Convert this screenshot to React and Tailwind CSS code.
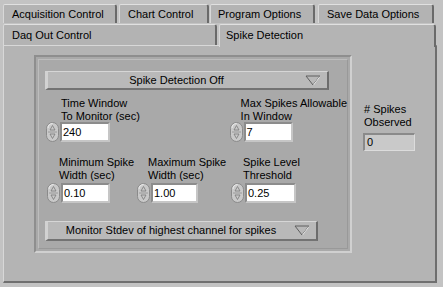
import React from "react";

function Spinner() {
  return (
    <svg width="13" height="20" viewBox="0 0 13 20" className="block shrink-0">
      <rect x="0.5" y="0.5" width="12" height="19" rx="6" ry="6" fill="#c9c9c9" stroke="#8a8a8a" />
      <path d="M2 6 Q2 2 6.5 1.5" stroke="#eeeeee" fill="none" />
      <line x1="2" y1="10" x2="11" y2="10" stroke="#9a9a9a" />
      <polygon points="6.5,3.5 9,8 4,8" fill="none" stroke="#7a7a7a" strokeWidth="0.8" />
      <polygon points="4,12 9,12 6.5,16.5" fill="none" stroke="#7a7a7a" strokeWidth="0.8" />
    </svg>
  );
}

function Numeric({ value, w }) {
  return (
    <div className="flex items-center">
      <Spinner />
      <div
        className={`ml-[1px] h-[20px] ${w} bg-white border-t-2 border-l-2 border-t-[#8c8c8c] border-l-[#8c8c8c] border-b-2 border-r-2 border-b-[#c6c6c6] border-r-[#c6c6c6] pl-[1px] leading-[16px]`}
      >
        {value}
      </div>
    </div>
  );
}

function Arrow() {
  return (
    <svg width="16" height="11" viewBox="0 0 16 11" className="block">
      <polygon points="1,1 15,1 8,10" fill="none" stroke="#5e5e5e" strokeWidth="1" />
      <line x1="15" y1="1.5" x2="8.5" y2="10" stroke="#e4e4e4" strokeWidth="1" />
    </svg>
  );
}

function Dropdown({ text, w, h, ml, mt }) {
  return (
    <div
      className={`${w} ${h} ${ml} ${mt} flex items-center bg-[#b9b9b9] border-l-[3px] border-l-[#d2d2d2] border-t border-t-[#d6d6d6] border-r-2 border-r-[#6c6c6c] border-b-2 border-b-[#737373]`}
    >
      <div className="flex-1 text-center whitespace-nowrap">{text}</div>
      <div className="w-[22px] flex justify-start">
        <Arrow />
      </div>
    </div>
  );
}

function Tab({ label, w, pl, className = "" }) {
  return (
    <div
      className={`${w} ${pl} shrink-0 whitespace-nowrap bg-[#b3b3b3] border-t border-t-[#e0e0e0] border-l border-l-[#d8d8d8] border-r-2 border-r-[#6a6a6a] rounded-tl-[2px] rounded-tr-[3px] ${className}`}
    >
      {label}
    </div>
  );
}

function Label({ a, b, ml }) {
  return (
    <div className={`${ml} whitespace-nowrap`}>
      <div>{a}</div>
      <div>{b}</div>
    </div>
  );
}

export default function App() {
  return (
    <div className="w-[443px] h-[287px] overflow-hidden bg-[#c3c3c3] text-[11px] leading-[13px] text-black font-['Liberation_Sans',Arial,sans-serif]">
      <div className="pl-[3px] pt-[4px]">
        {/* Row 1 tabs */}
        <div className="flex h-[19px]">
          <Tab label="Acquisition Control" w="w-[114px]" pl="pl-[8px] pt-[3px]" />
          <Tab label="Chart Control" w="w-[90px] ml-[2px]" pl="pl-[8px] pt-[3px]" />
          <Tab label="Program Options" w="w-[105px] ml-[1px]" pl="pl-[7px] pt-[3px]" />
          <Tab label="Save Data Options" w="w-[116px] ml-[3px]" pl="pl-[8px] pt-[3px]" />
        </div>
        {/* Row 2 tabs */}
        <div className="flex h-[21px] mt-[1px]">
          <Tab label="Daq Out Control" w="w-[214px]" pl="pl-[8px] pt-[4px]" />
          <Tab
            label="Spike Detection"
            w="w-[217px] ml-[2px]"
            pl="pl-[6px] pt-[4px]"
            className="bg-[#b4b4b4] h-[23px] relative z-10"
          />
        </div>
        {/* Panel */}
        <div className="w-[434px] h-[238px] bg-[#b4b4b4] border-t border-t-[#d8d8d8] border-l border-l-[#d8d8d8] border-r-2 border-r-[#6e6e6e] border-b-2 border-b-[#707070] flex">
          {/* Inner sunken box */}
          <div className="ml-[30px] mt-[9px] w-[318px] h-[198px] bg-[#a9a9a9] border-2 border-t-[#8e8e8e] border-l-[#8e8e8e] border-b-[#d0d0d0] border-r-[#d0d0d0] p-[2px]">
            <div className="w-full h-full border border-t-[#bdbdbd] border-l-[#bdbdbd] border-b-[#999999] border-r-[#999999] flex flex-col">
              <Dropdown text="Spike Detection Off" w="w-[284px]" h="h-[19px]" ml="ml-[6px]" mt="mt-[11px]" />
              {/* Row A */}
              <div className="flex mt-[7px] ml-[7px]">
                <div className="w-[185px] flex flex-col">
                  <Label a="Time Window" b="To Monitor (sec)" ml="ml-[15px]" />
                  <div className="-mt-[1px]">
                    <Numeric value="240" w="w-[50px]" />
                  </div>
                </div>
                <div className="flex flex-col">
                  <Label a="Max Spikes Allowable" b="In Window" ml="ml-[11px]" />
                  <div className="-mt-[1px]">
                    <Numeric value="7" w="w-[49px]" />
                  </div>
                </div>
              </div>
              {/* Row B */}
              <div className="flex mt-[14px] ml-[8px]">
                <div className="w-[90px] flex flex-col">
                  <Label a="Minimum Spike" b="Width (sec)" ml="ml-[12px]" />
                  <div className="mt-[1px]">
                    <Numeric value="0.10" w="w-[49px]" />
                  </div>
                </div>
                <div className="w-[94px] flex flex-col">
                  <Label a="Maximum Spike" b="Width (sec)" ml="ml-[11px]" />
                  <div className="mt-[1px]">
                    <Numeric value="1.00" w="w-[47px]" />
                  </div>
                </div>
                <div className="flex flex-col">
                  <Label a="Spike Level" b="Threshold" ml="ml-[12px]" />
                  <div className="mt-[1px]">
                    <Numeric value="0.25" w="w-[51px]" />
                  </div>
                </div>
              </div>
              <Dropdown
                text="Monitor Stdev of highest channel for spikes"
                w="w-[273px]"
                h="h-[20px]"
                ml="ml-[6px]"
                mt="mt-[18px]"
              />
            </div>
          </div>
          {/* Right indicator */}
          <div className="ml-[11px] mt-[57px] flex flex-col">
            <Label a="# Spikes" b="Observed" ml="ml-[1px]" />
            <div className="mt-[4px] w-[52px] h-[18px] bg-[#c9c9c9] border-t-2 border-l-2 border-t-[#8a8a8a] border-l-[#8a8a8a] border-b border-r border-b-[#dcdcdc] border-r-[#dcdcdc] pl-[2px] leading-[15px]">
              0
            </div>
          </div>
        </div>
      </div>
    </div>
  );
}
